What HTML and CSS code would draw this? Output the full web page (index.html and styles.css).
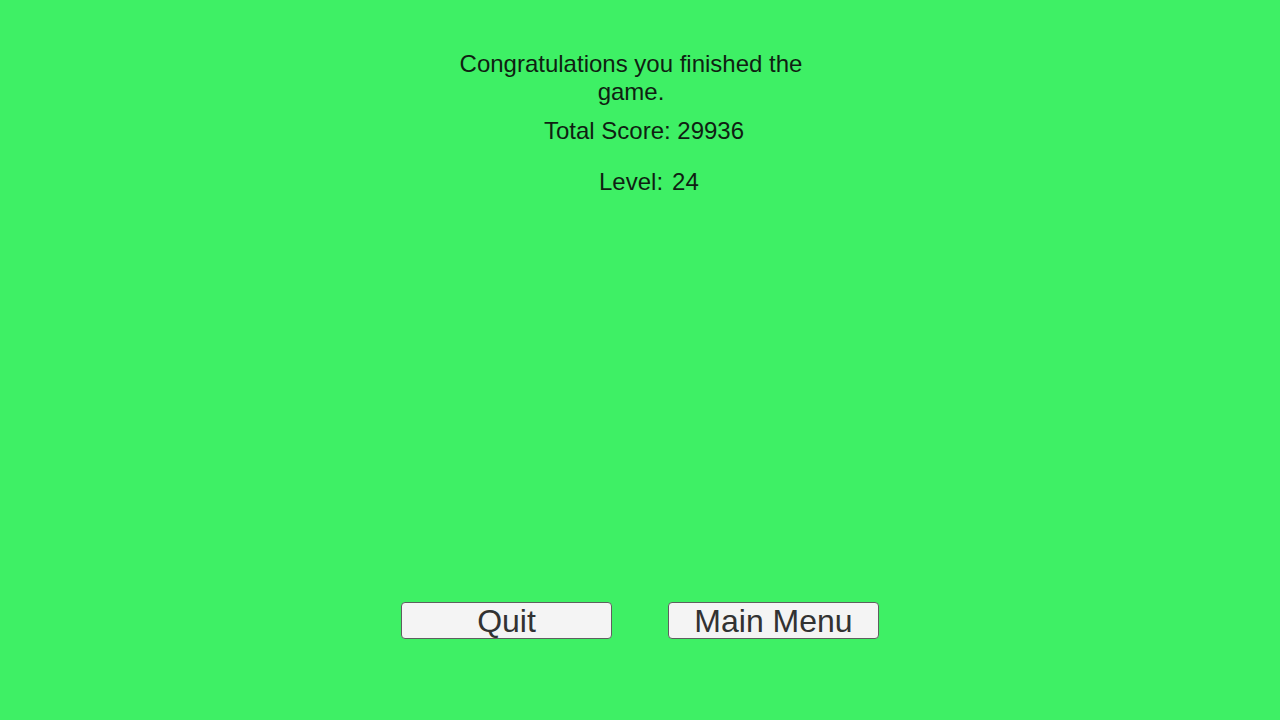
FILE: index.html
```html
<!DOCTYPE html>
<html>
<head>
<meta charset="utf-8">
<link rel="stylesheet" href="styles.css">
</head>
<body>
<div class="screen">
  <div class="title">Congratulations you finished the game.</div>
  <div class="score">Total Score: 29936</div>
  <div class="level"><span>Level:</span><span>24</span></div>
  <div class="spacer"></div>
  <div class="buttons">
    <button class="btn">Quit</button>
    <button class="btn">Main Menu</button>
  </div>
</div>
</body>
</html>
```
FILE: styles.css
```css
html, body {
  margin: 0;
  padding: 0;
  width: 1280px;
  height: 720px;
  overflow: hidden;
  background: #3ef065;
}
.screen {
  width: 1280px;
  height: 720px;
  display: flex;
  flex-direction: column;
  font-family: "Liberation Sans", Arial, sans-serif;
  color: #0f1f12;
}
.title {
  margin-top: 50px;
  margin-left: 451px;
  width: 360px;
  text-align: center;
  font-size: 24px;
  line-height: 28px;
}
.score {
  margin-top: 11px;
  margin-left: 524px;
  width: 240px;
  text-align: center;
  font-size: 24px;
  line-height: 28px;
  white-space: nowrap;
}
.level {
  margin-top: 23px;
  margin-left: 599px;
  display: flex;
  gap: 9px;
  font-size: 24px;
  line-height: 28px;
}
.spacer {
  height: 406px;
}
.buttons {
  display: flex;
  gap: 56px;
  margin-left: 401px;
}
.btn {
  width: 211px;
  height: 37px;
  box-sizing: border-box;
  background: #f4f4f4;
  border: 1px solid #5f5f5f;
  border-radius: 4px;
  font-family: "Liberation Sans", Arial, sans-serif;
  font-size: 32px;
  line-height: 35px;
  color: #323232;
  padding: 0;
  padding-top: 1px;
}
```
